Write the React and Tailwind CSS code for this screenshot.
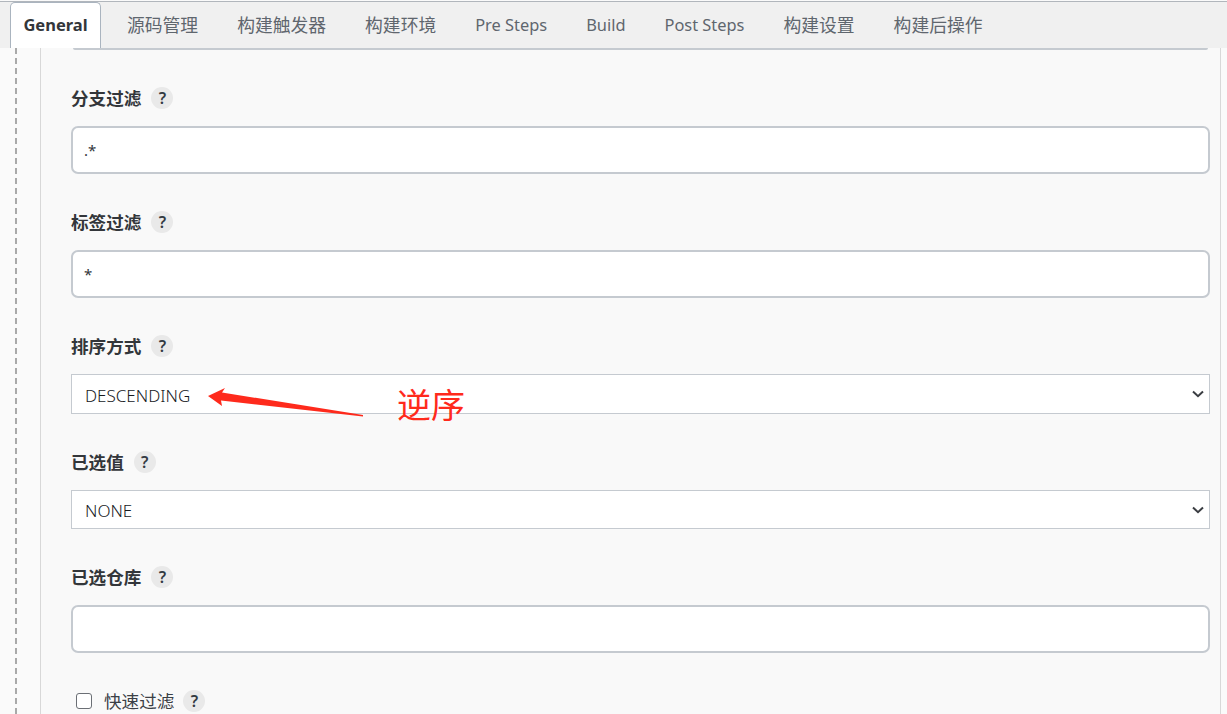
import React from "react";

const tabs = [
  { t: "源码管理", s: "text-[17.8px]" },
  { t: "构建触发器", s: "text-[17.8px]" },
  { t: "构建环境", s: "text-[17.8px]" },
  { t: "Pre Steps", s: "text-[16.4px]" },
  { t: "Build", s: "text-[16.4px]" },
  { t: "Post Steps", s: "text-[16.4px]" },
  { t: "构建设置", s: "text-[17.8px]" },
  { t: "构建后操作", s: "text-[17.8px]" },
];

function Help({ className = "" }) {
  return (
    <span className={`flex h-[22px] w-[22px] shrink-0 items-center justify-center rounded-full bg-[#e9e9e9] text-[16px] font-semibold text-[#333a42] ${className}`}>?</span>
  );
}

function Label({ text }) {
  return (
    <div className="flex h-6 items-center gap-[10px] text-[17.6px] font-bold text-[#33363a]">
      <span className="pt-[1px]">{text}</span>
      <Help />
    </div>
  );
}

function TextField({ value }) {
  return (
    <div className="mt-4 mb-9 flex h-12 items-center rounded-[7px] border-2 border-[#c5cad0] bg-white px-[11px] text-[15px] font-normal text-[#33363a]">
      {value}
    </div>
  );
}

function SelectField({ value, h }) {
  return (
    <div className={`mt-4 mb-9 flex items-center justify-between border border-[#c5cad0] bg-white pl-[13px] pr-[5px] text-[17px] font-light text-[#16191d] ${h}`}>
      <span className="pt-[3px]">{value}</span>
      <svg width="12" height="8" viewBox="0 0 12 8" fill="none" stroke="#3a3d42" strokeWidth="2">
        <path d="M1 1.5 L6 6.2 L11 1.5" />
      </svg>
    </div>
  );
}

export default function App() {
  return (
    <div className="relative h-[714px] w-[1227px] overflow-hidden bg-[#fafafa] pt-px font-['Noto_Sans','Noto_Sans_CJK_SC',sans-serif]">
      <header className="flex h-[47px] gap-[11px] border-t border-[#b1b6bc] bg-[#f0f0f0] pl-[10px] text-[#5f666e]">
        <div className="mr-px flex h-[46px] w-[91px] items-center justify-center rounded-t-[5px] border border-b-0 border-[#aab4bf] bg-white text-[16.5px] font-bold text-[#33363a]">
          General
        </div>
        {tabs.map(({ t, s }) => (
          <div key={t} className={`flex h-[46px] items-center px-[14px] font-normal ${s}`}>
            {t}
          </div>
        ))}
      </header>

      <main className="ml-[15px] h-[666px] border-l-2 border-dashed border-[#a9a9a9] pl-[23px]">
        <div className="mr-[6px] h-full border-x border-[#d8d8d8] bg-[#f9f9f9] pl-[30px] pr-[10px]">
          <div className="mx-[2px] h-[2px] rounded-b bg-[#c5cad0]" />
          <div className="h-9" />
          <Label text="分支过滤" />
          <TextField value=".*" />
          <Label text="标签过滤" />
          <TextField value="*" />
          <Label text="排序方式" />
          <SelectField value="DESCENDING" h="h-10" />
          <Label text="已选值" />
          <SelectField value="NONE" h="h-[39px]" />
          <Label text="已选仓库" />
          <TextField value="" />
          <div className="flex h-6 items-center pl-[5px] text-[17.6px] text-[#3b4046]">
            <span className="h-4 w-4 rounded-[3px] border border-[#6b6f75] bg-white" />
            <span className="ml-[12px]">快速过滤</span>
            <Help className="ml-[9px]" />
          </div>
        </div>
      </main>

      <svg className="absolute left-[205px] top-[384px]" width="162" height="36" viewBox="205 384 162 36">
        <path d="M208 396 L225 388 L222 392.5 L363 415 L363 416.5 L221 400.5 L222 406 Z" fill="#fe2a1c" />
      </svg>
      <span className="absolute left-[397px] top-[383px] text-[34px] leading-[44px] font-normal text-[#ff2a1c]">逆序</span>
    </div>
  );
}
